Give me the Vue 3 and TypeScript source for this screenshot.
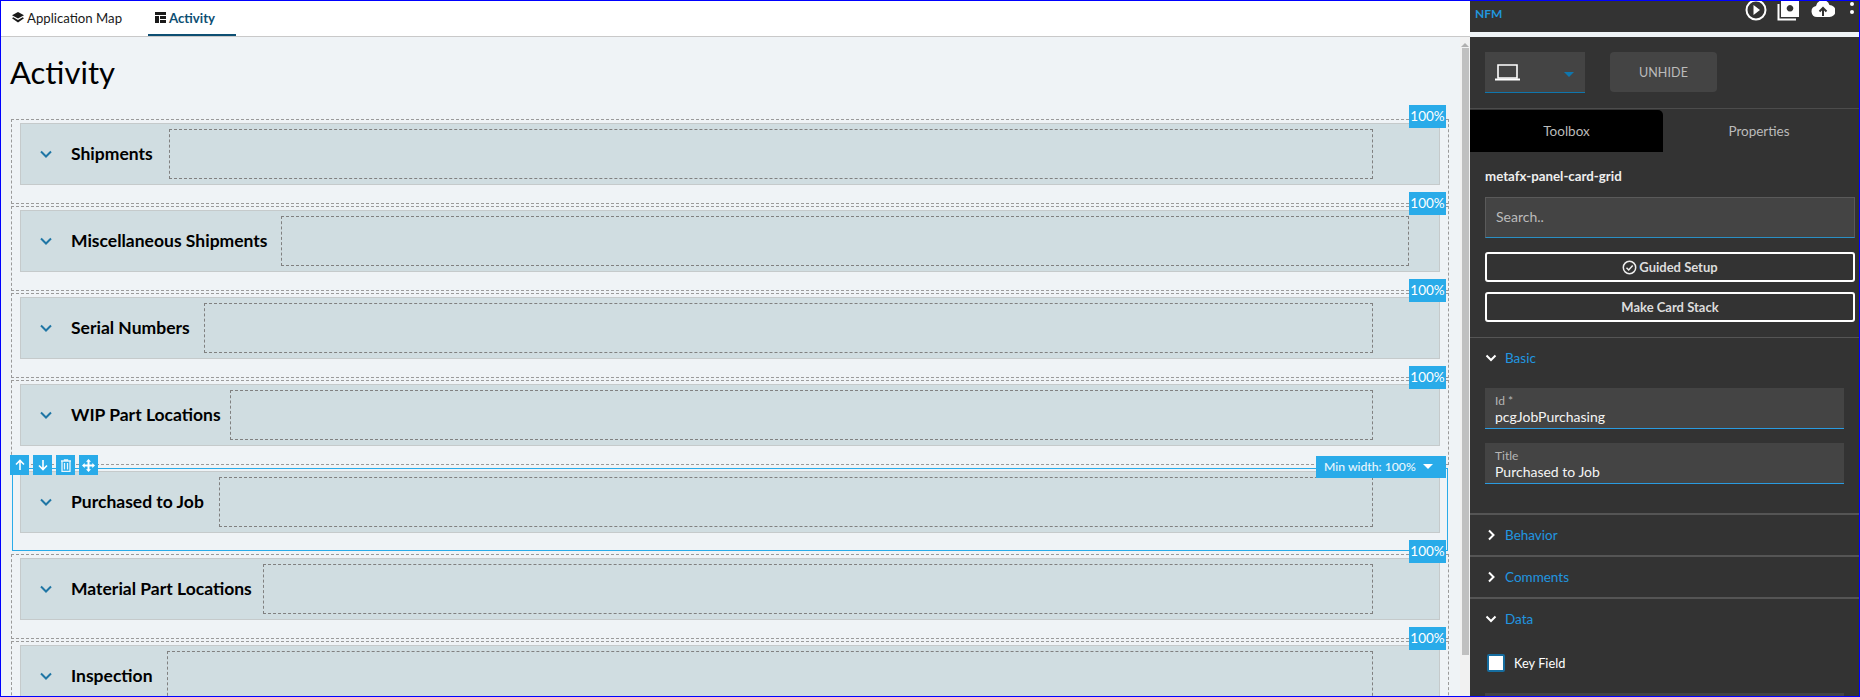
<script setup lang="ts">
interface Row { title: string; titleWidth: number; endGap: number; selected?: boolean }
const rows: Row[] = [
  { title: 'Shipments', titleWidth: 83, endGap: 66 },
  { title: 'Miscellaneous Shipments', titleWidth: 195, endGap: 30 },
  { title: 'Serial Numbers', titleWidth: 118, endGap: 66 },
  { title: 'WIP Part Locations', titleWidth: 144, endGap: 66 },
  { title: 'Purchased to Job', titleWidth: 133, endGap: 66, selected: true },
  { title: 'Material Part Locations', titleWidth: 177, endGap: 66 },
  { title: 'Inspection', titleWidth: 81, endGap: 66 }
]
const sections = [
  { name: 'Behavior' },
  { name: 'Comments' }
]
</script>

<template>
  <div class="app">
    <div class="left">
      <nav class="tabs">
        <a class="tab">
          <svg class="ic" width="12" height="11" viewBox="0 0 12 11"><path d="M6 0 12 3.300 6 6.600 0 3.300z" fill="#1a1a1a"/><path d="M1.300 5.300 0 6.200 6 10.500l6-4.300-1.300-.9L6 8z" fill="#1a1a1a"/></svg>
          <span>Application Map</span>
        </a>
        <a class="tab active">
          <svg class="ic" width="11" height="11" viewBox="0 0 11 11"><path d="M0 0h11v3H0zM0 4h4v7H0zM5 4h6v3H5zM5 8h6v3H5z" fill="#1a1a1a"/></svg>
          <span>Activity</span>
        </a>
      </nav>
      <div class="body">
        <main class="content">
          <h1 class="heading">Activity</h1>
          <div class="list">
            <section v-for="r in rows" :key="r.title" class="row" :class="{ selected: r.selected }">
              <div class="card">
                <svg class="chev" width="14" height="9" viewBox="0 0 14 9"><path d="M2 1.500 7 6.500 12 1.500" fill="none" stroke="#1f76a5" stroke-width="2"/></svg>
                <span class="card-title" :style="{ width: r.titleWidth + 'px' }">{{ r.title }}</span>
                <div class="slot" :style="{ marginRight: r.endGap + 'px' }"></div>
              </div>
              <template v-if="r.selected">
                <div class="tools">
                  <button class="tool"><svg width="12" height="12" viewBox="0 0 12 12"><path d="M6 11V2M2 5.500 6 1.500l4 4" fill="none" stroke="#fff" stroke-width="1.600"/></svg></button>
                  <button class="tool"><svg width="12" height="12" viewBox="0 0 12 12"><path d="M6 1v9M2 6.500l4 4 4-4" fill="none" stroke="#fff" stroke-width="1.600"/></svg></button>
                  <button class="tool"><svg width="12" height="13" viewBox="0 0 12 13"><path d="M1 2h10M4.500 2V.8h3V2M2 2v10.500h8V2M4.500 4v6.500M7.500 4v6.500" fill="none" stroke="#e8f6fd" stroke-width="1.300"/></svg></button>
                  <button class="tool"><svg width="13" height="13" viewBox="0 0 13 13"><path d="M6.500 0 9 2.700H7.500V5.500H10.300V4L13 6.500 10.300 9V7.500H7.500V10.300H9L6.500 13 4 10.300H5.500V7.500H2.700V9L0 6.500 2.700 4V5.500H5.500V2.700H4z" fill="#fff"/></svg></button>
                </div>
                <div class="min-width">Min width: 100% <i class="caret"></i></div>
              </template>
              <div v-else class="badge">100%</div>
            </section>
          </div>
        </main>
        <aside class="scrollbar">
          <i class="arrow"></i>
          <div class="thumb"></div>
        </aside>
      </div>
    </div>

    <div class="panel">
      <header class="panel-top">
        <span class="nfm">NFM</span>
        <div class="top-icons">
          <svg width="22" height="22" viewBox="0 0 22 22"><circle cx="11" cy="11" r="9.500" fill="none" stroke="#fff" stroke-width="2"/><path d="M8.500 6 15 11l-6.500 5z" fill="#fff"/></svg>
          <svg width="24" height="22" viewBox="0 0 24 22"><path d="M1.500 5v15.500H19" fill="none" stroke="#fff" stroke-width="2"/><path fill-rule="evenodd" d="M4 0h18v18H4zM13 6a3.300 3.300 0 1 0 .01 0z" fill="#fff"/></svg>
          <svg width="24" height="20" viewBox="0 0 24 20"><path d="M6 18a5.500 5.500 0 0 1-1-10.900A7 7 0 0 1 18.500 6 6 6 0 0 1 18.500 18z" fill="#fff"/><path d="M12 17V9M8.500 12.500 12 9l3.500 3.500" fill="none" stroke="#333" stroke-width="2"/></svg>
          <div class="kebab"><i></i><i></i></div>
        </div>
      </header>
      <div class="panel-gap"></div>
      <div class="panel-main">
        <div class="device-row">
          <div class="device">
            <svg width="25" height="18" viewBox="0 0 25 18"><path d="M3 2h19v13H3z" fill="none" stroke="#fff" stroke-width="1.600"/><path d="M0 15.500h25V17.500H0z" fill="#fff"/></svg>
            <i class="blue-caret"></i>
          </div>
          <button class="unhide">UNHIDE</button>
        </div>
        <div class="mode-tabs">
          <div class="mode on">Toolbox</div>
          <div class="mode">Properties</div>
        </div>
        <div class="comp-name">metafx-panel-card-grid</div>
        <div class="search">Search..</div>
        <button class="outline first">
          <svg width="15" height="15" viewBox="0 0 15 15"><circle cx="7.500" cy="7.500" r="6.200" fill="none" stroke="#eee" stroke-width="1.500"/><path d="M4.500 7.800 6.700 10 10.700 5.500" fill="none" stroke="#eee" stroke-width="1.500"/></svg>
          Guided Setup
        </button>
        <button class="outline">Make Card Stack</button>
        <div class="rule thin"></div>
        <div class="sec">
          <svg width="12" height="8" viewBox="0 0 12 8"><path d="M1.500 1.500 6 6l4.500-4.500" fill="none" stroke="#fff" stroke-width="2"/></svg>
          <span>Basic</span>
        </div>
        <div class="field id">
          <label>Id *</label>
          <div class="val">pcgJobPurchasing</div>
        </div>
        <div class="field">
          <label>Title</label>
          <div class="val">Purchased to Job</div>
        </div>
        <div class="rule thick"></div>
        <template v-for="s in sections" :key="s.name">
          <div class="sec closed">
            <svg width="12" height="12" viewBox="0 0 12 12"><path d="M4 1.500 8.500 6 4 10.500" fill="none" stroke="#fff" stroke-width="2"/></svg>
            <span>{{ s.name }}</span>
          </div>
          <div class="rule thick short"></div>
        </template>
        <div class="sec">
          <svg width="12" height="8" viewBox="0 0 12 8"><path d="M1.500 1.500 6 6l4.500-4.500" fill="none" stroke="#fff" stroke-width="2"/></svg>
          <span>Data</span>
        </div>
        <label class="check"><i class="box"></i><span>Key Field</span></label>
        <div class="next-field"></div>
      </div>
    </div>
  </div>
</template>

<style>
html, body { margin: 0; background: #fff; overflow: hidden; }
</style>

<style scoped>
.app { box-sizing: border-box; width: 1860px; height: 697px; border: 1px solid #0000ff; display: flex; overflow: hidden; font-family: Lato, "Noto Sans", sans-serif; color: #000; }
.left { width: 1469px; display: flex; flex-direction: column; }
.tabs { height: 35px; background: #fff; border-bottom: 1px solid #c9c9c9; display: flex; flex: none; }
.tab { display: flex; align-items: center; gap: 3px; height: 35px; box-sizing: border-box; font-size: 13.200px; color: #1a1a1a; }
.tab:first-child { padding: 0 0 2px 11px; width: 147px; }
.tab.active { width: 88px; padding-left: 7px; color: #0d4f73; font-weight: 700; border-bottom: 2px solid #0d4f73; }
.body { flex: 1; display: flex; min-height: 0; }
.content { flex: 1; background: #eff3f6; padding: 0 0 0 10px; min-width: 0; overflow: hidden; }
.heading { margin: 12px 0 0 -1px; font-size: 31px; line-height: 46px; font-weight: 400; height: 46px; }
.list { margin-top: 24px; width: 1438px; }
.row { position: relative; box-sizing: border-box; height: 85px; margin-bottom: 2px; border: 1px dashed #9a9a9a; padding: 3px 8px 0 8px; }
.row.selected { border: 1px solid #29abe9; margin: 3px 1px 3px 1px; height: 83px; padding: 2px 7px 0 7px; }
.card { box-sizing: border-box; height: 62px; background: #d0dde1; border: 1px solid #c5cacb; display: flex; align-items: center; padding-left: 18px; }
.chev { flex: none; margin-right: 18px; }
.card-title { flex: none; font-size: 17.500px; font-weight: 700; white-space: nowrap; margin-top: -2px; }
.slot { flex: 1; height: 50px; box-sizing: border-box; margin-left: 15px; border: 1px dashed #808080; }
.badge { position: absolute; right: 2px; top: -15px; width: 37px; height: 23px; background: #29abe9; color: #fff; font-size: 13.500px; line-height: 23px; text-align: center; z-index: 2; }
.tools { position: absolute; left: -3px; top: -14px; display: flex; gap: 4px; z-index: 2; }
.tool { width: 19px; height: 20px; padding: 0; border: 0; background: #29abe9; display: flex; align-items: center; justify-content: center; }
.min-width { position: absolute; right: 1px; top: -13px; width: 130px; height: 22px; box-sizing: border-box; background: #29abe9; color: #eaf7fd; font-size: 12.200px; font-weight: 500; line-height: 22px; padding-left: 8px; z-index: 2; white-space: nowrap; }
.caret { display: inline-block; width: 0; height: 0; margin-left: 4px; border: 5px solid transparent; border-top: 5px solid #fff; border-bottom: 0; vertical-align: 2px; }
.scrollbar { width: 10px; flex: none; background: #f1f1f1; display: flex; flex-direction: column; align-items: center; }
.arrow { margin-top: 6px; width: 0; height: 0; border: 4px solid transparent; border-top: 0; border-bottom: 4px solid #b0b0b0; }
.thumb { margin-top: 1px; width: 7px; height: 607px; background: #c0c0c0; }
.panel { flex: 1; display: flex; flex-direction: column; background: #333; min-width: 0; }
.panel-top { height: 31px; flex: none; display: flex; justify-content: space-between; overflow: hidden; }
.nfm { padding: 6px 0 0 5px; font-size: 12px; line-height: 14px; color: #2196dc; font-weight: 700; }
.top-icons { display: flex; align-items: flex-start; gap: 10px; margin-top: -2px; padding-right: 5px; }
.top-icons > svg:first-child { margin-left: -2px; }
.kebab { display: flex; flex-direction: column; gap: 4px; margin-left: 5px; margin-top: 3px; }
.kebab i { width: 4px; height: 4px; border-radius: 50%; background: #fff; display: block; }
.panel-gap { height: 5px; background: #eff3f6; flex: none; }
.panel-main { flex: 1; padding: 0; overflow: hidden; }
.device-row { display: flex; gap: 25px; padding: 15px 0 15px 15px; border-bottom: 1px solid #4c4c4c; }
.device { position: relative; box-sizing: border-box; width: 100px; height: 41px; background: #444; border-bottom: 1px solid #0f76ad; padding: 11px 0 0 10px; }
.blue-caret { position: absolute; right: 11px; top: 20px; width: 0; height: 0; border: 5px solid transparent; border-top: 5px solid #0f76ad; border-bottom: 0; }
.unhide { width: 107px; height: 40px; padding: 0; border: 0; border-radius: 4px; background: #444; color: #bbb; font: 400 12.500px Lato, sans-serif; letter-spacing: .1px; }
.mode-tabs { display: flex; margin-top: 1px; height: 42px; }
.mode { font-size: 13.500px; line-height: 42px; text-align: center; color: #bbb; }
.mode.on { width: 193px; flex: none; background: #000; border-top-right-radius: 5px; }
.mode + .mode { flex: 1; padding-right: 4px; }
.comp-name { margin: 15px 0 0 15px; font-size: 13.300px; line-height: 18px; font-weight: 700; color: #eee; }
.search { box-sizing: border-box; margin: 12px 0 0 15px; width: 370px; height: 41px; background: #444; border: 1px solid #5a5a5a; border-bottom: 1px solid #2a8fc4; font-size: 14px; line-height: 38px; padding-left: 10px; color: #bbb; }
.outline { display: flex; align-items: center; justify-content: center; gap: 2px; box-sizing: border-box; margin: 10px 0 0 15px; width: 370px; height: 30px; background: transparent; border: 2px solid #fff; border-radius: 3px; color: #ddd; font: 700 13px Lato, sans-serif; padding: 0; }
.outline.first { margin-top: 14px; }
.rule { background: #555; }
.rule.thin { height: 1px; margin-top: 15px; }
.rule.thick { height: 2px; margin-top: 29px; }
.rule.thick.short { margin-top: 0; }
.sec { display: flex; align-items: center; height: 40px; padding-left: 15px; gap: 8px; font-size: 13.500px; color: #2196e0; }
.field { box-sizing: border-box; margin-left: 15px; width: 359px; height: 41px; background: #444; border-bottom: 1px solid #2a9be0; padding: 6px 0 0 10px; margin-top: 14px; }
.field.id { margin-top: 10px; }
.field label { display: block; font-size: 12px; line-height: 14px; color: #b5b5b5; }
.field .val { font-size: 14px; line-height: 17px; color: #f4f4f4; }
.check { display: flex; align-items: center; margin: 15px 0 0 17px; gap: 9px; font-size: 12.800px; color: #fff; height: 18px; }
.box { box-sizing: border-box; width: 18px; height: 18px; background: #fff; border: 2px solid #166d9f; border-radius: 2px; }
.next-field { margin: 21px 0 0 15px; width: 359px; height: 10px; background: #444; }
</style>
